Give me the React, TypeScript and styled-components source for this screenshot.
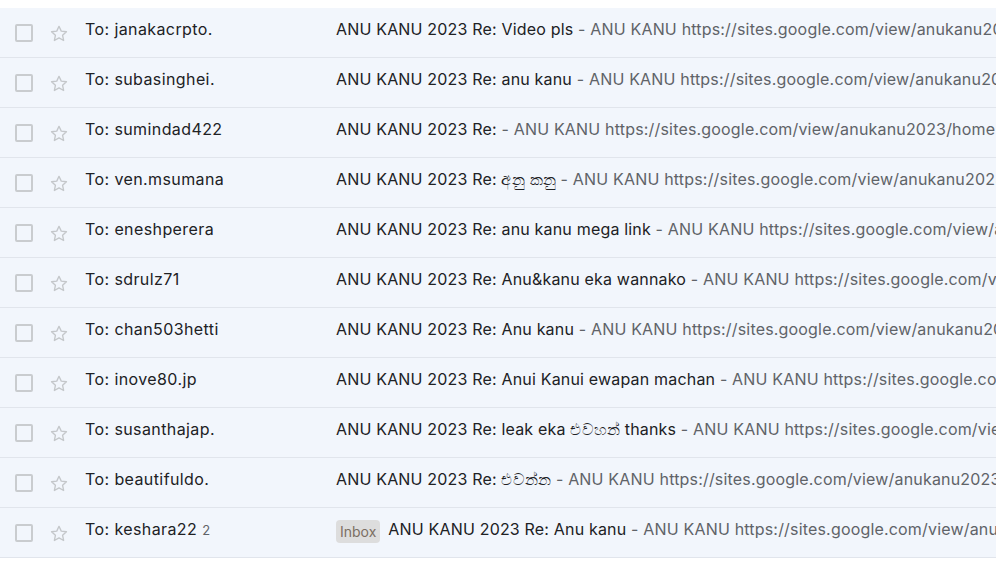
import styled, {createGlobalStyle} from 'styled-components'

const GlobalStyle = createGlobalStyle`
    html, body {
        margin: 0;
        padding: 0;
        background: #ffffff;
        overflow: hidden;
    }
    body {
        font-family: Inter, Roboto, "Noto Sans", "Liberation Sans", sans-serif;
        -webkit-font-smoothing: antialiased;
    }
`

const List = styled.div`
    width: 996px;
    padding-top: 8px;
    overflow: hidden;
`

const Row = styled.div`
    display: flex;
    align-items: center;
    height: 49px;
    background: #f2f6fc;
    border-bottom: 1px solid #e1e5ec;
    white-space: nowrap;
    cursor: pointer;
`

const Box = styled.span`
    flex: none;
    width: 14px;
    height: 14px;
    margin-left: 15px;
    margin-top: 1px;
    border: 2px solid #c9cccf;
    border-radius: 2px;
`

const StarWrap = styled.span`
    flex: none;
    display: flex;
    width: 20px;
    height: 20px;
    margin-left: 16px;
    margin-top: 2px;
`

const Sender = styled.div`
    flex: none;
    width: 250px;
    margin-left: 16px;
    margin-top: -8px;
    font-size: 16px;
    letter-spacing: 0.4px;
    color: #202124;
    overflow: hidden;
`

const Count = styled.span`
    margin-left: 5px;
    font-size: 13px;
    letter-spacing: 0;
    color: #5f6368;
`

const Subject = styled.div`
    flex: none;
    display: flex;
    align-items: center;
    margin-left: 1px;
    margin-top: -8px;
    font-size: 16px;
    letter-spacing: 0.18px;
    color: #202124;
`

const Snippet = styled.span`
    color: #5f6368;
`

const Chip = styled.span`
    display: inline-flex;
    align-items: center;
    height: 23px;
    padding: 0 4px;
    margin-right: 8px;
    margin-top: 6px;
    border-radius: 4px;
    background: #dddddd;
    color: #7b6f63;
    font-size: 14px;
    letter-spacing: 0;
`

function Star() {
    return (
        <svg width="20" height="20" viewBox="0 0 24 24" fill="none">
            <path
                d="M12 2.8l2.7 5.75 6.25.72-4.64 4.28 1.24 6.2L12 16.66 6.45 19.75l1.24-6.2L3.05 9.27l6.25-.72L12 2.8z"
                stroke="#c4c7ca"
                strokeWidth="1.6"
                strokeLinejoin="round"
            />
        </svg>
    )
}

interface Mail {
    to: string
    count?: number
    subject: string
    snippet: string
    inbox?: boolean
}

const SITE = 'ANU KANU https://sites.google.com/view/anukanu2023/home'

const mails: Mail[] = [
    {to: 'janakacrpto.', subject: 'Video pls', snippet: SITE},
    {to: 'subasinghei.', subject: 'anu kanu', snippet: SITE},
    {to: 'sumindad422', subject: '', snippet: SITE},
    {to: 'ven.msumana', subject: 'අනු කනු', snippet: SITE},
    {to: 'eneshperera', subject: 'anu kanu mega link', snippet: SITE},
    {to: 'sdrulz71', subject: 'Anu&kanu eka wannako', snippet: SITE},
    {to: 'chan503hetti', subject: 'Anu kanu', snippet: SITE},
    {to: 'inove80.jp', subject: 'Anui Kanui ewapan machan', snippet: SITE},
    {to: 'susanthajap.', subject: 'leak eka එවහන් thanks', snippet: SITE},
    {to: 'beautifuldo.', subject: 'එවන්න', snippet: SITE},
    {to: 'keshara22', count: 2, subject: 'Anu kanu', snippet: SITE, inbox: true},
]

export default function App() {
    return (
        <>
            <GlobalStyle/>
            <List>
                {mails.map((m) => (
                    <Row key={m.to}>
                        <Box/>
                        <StarWrap><Star/></StarWrap>
                        <Sender>
                            To: {m.to}
                            {m.count != null && <Count>{m.count}</Count>}
                        </Sender>
                        <Subject>
                            {m.inbox && <Chip>Inbox</Chip>}
                            <span>ANU KANU 2023 Re: {m.subject}</span>
                            <Snippet>&nbsp;- {m.snippet}</Snippet>
                        </Subject>
                    </Row>
                ))}
            </List>
        </>
    )
}
